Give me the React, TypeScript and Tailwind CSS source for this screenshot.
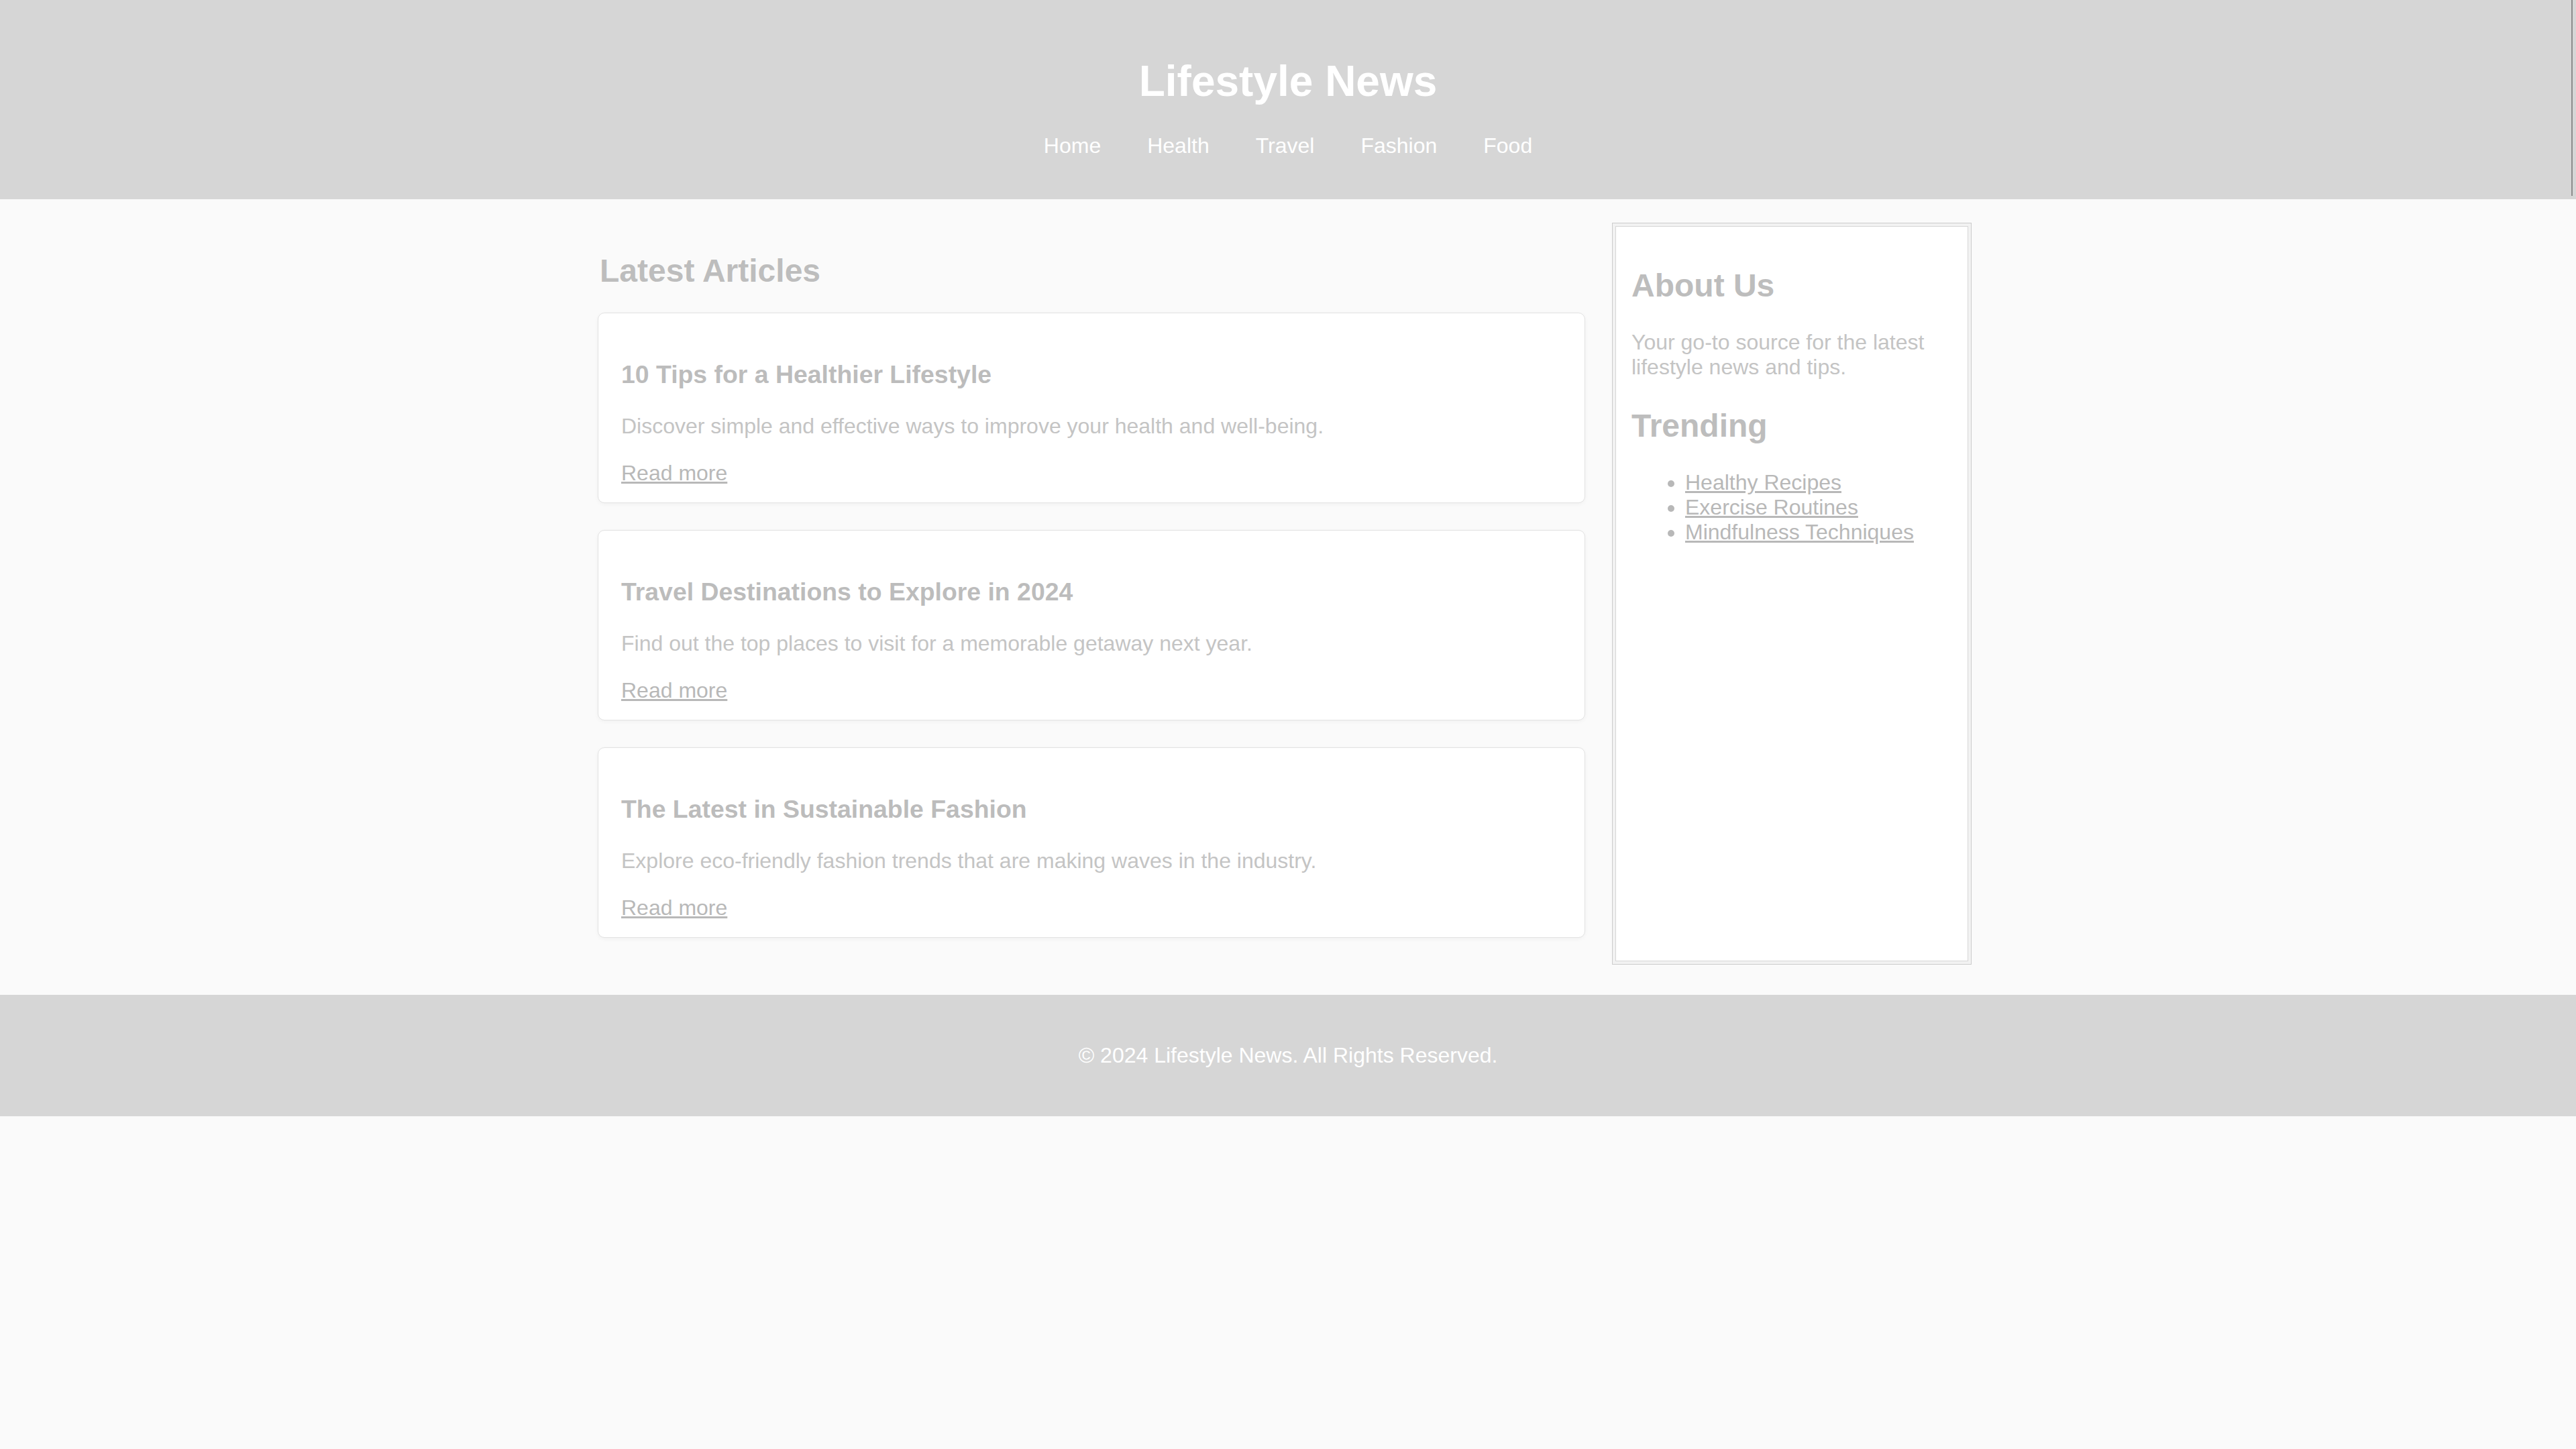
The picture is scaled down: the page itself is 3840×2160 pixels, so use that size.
const articles = [
  {
    title: "10 Tips for a Healthier Lifestyle",
    text: "Discover simple and effective ways to improve your health and well-being.",
  },
  {
    title: "Travel Destinations to Explore in 2024",
    text: "Find out the top places to visit for a memorable getaway next year.",
  },
  {
    title: "The Latest in Sustainable Fashion",
    text: "Explore eco-friendly fashion trends that are making waves in the industry.",
  },
];

const navLinks = ["Home", "Health", "Travel", "Fashion", "Food"];
const trending = ["Healthy Recipes", "Exercise Routines", "Mindfulness Techniques"];

export default function App() {
  return (
    <div className="min-h-screen bg-[#fafafa] font-['Liberation_Sans',Arial,sans-serif]">
      <header className="relative bg-[#d6d6d6] pt-[84px] pb-[61px] text-center text-white">
        <h1 className="text-[64px] font-bold leading-[74px]">Lifestyle News</h1>
        <nav className="mt-[41px]">
          <ul className="flex justify-center gap-[69px] text-[32px] leading-[37px]">
            {navLinks.map((link) => (
              <li key={link}>
                <a href="#">{link}</a>
              </li>
            ))}
          </ul>
        </nav>
        {/* thin scrollbar-ish line on the right edge */}
        <div className="absolute right-[5px] top-0 h-[292px] w-[2px] bg-[#8c8c8c]" />
      </header>

      <main className="flex justify-center pr-[10px] pt-[35px] pb-[45px]">
        <div className="flex w-[2048px] gap-[40px]">
          <section className="w-[1472px]">
            <h2 className="mt-[44px] mb-[35px] ml-[3px] text-[48px] font-bold leading-[55px] text-[#bdbdbd]">
              Latest Articles
            </h2>
            {articles.map((article) => (
              <article
                key={article.title}
                className="mb-[40px] rounded-[10px] border border-[#e2e2e2] bg-white px-[34px] pt-[70px] pb-[25px] shadow-[0_2px_6px_rgba(0,0,0,0.04)]"
              >
                <h3 className="mb-[37px] text-[37.4px] font-bold leading-[43px] text-[#bcbcbc]">
                  {article.title}
                </h3>
                <p className="mb-[33px] text-[32px] leading-[37px] text-[#c4c4c4]">{article.text}</p>
                <a href="#" className="block w-fit text-[32px] leading-[37px] text-[#b8b8b8] underline">
                  Read more
                </a>
              </article>
            ))}
          </section>

          <aside className="w-[536px] border border-[#cccccc] bg-[#f2f2f2] p-[4px]">
            <div className="h-full border border-[#d6d6d6] bg-white p-[23px]">
              <h2 className="mt-[37px] text-[48px] font-bold leading-[55px] text-[#bdbdbd]">About Us</h2>
              <p className="mt-[39px] text-[32px] leading-[37px] text-[#c4c4c4]">
                Your go-to source for the latest lifestyle news and tips.
              </p>
              <h2 className="mt-[41px] text-[48px] font-bold leading-[55px] text-[#bdbdbd]">Trending</h2>
              <ul className="mt-[39px] list-disc pl-[80px] text-[32px] leading-[37px] text-[#b8b8b8]">
                {trending.map((item) => (
                  <li key={item}>
                    <a href="#" className="underline">
                      {item}
                    </a>
                  </li>
                ))}
              </ul>
            </div>
          </aside>
        </div>
      </main>

      <footer className="bg-[#d6d6d6] py-[72px] text-center text-[32px] leading-[37px] text-white">
        <p>© 2024 Lifestyle News. All Rights Reserved.</p>
      </footer>
    </div>
  );
}
